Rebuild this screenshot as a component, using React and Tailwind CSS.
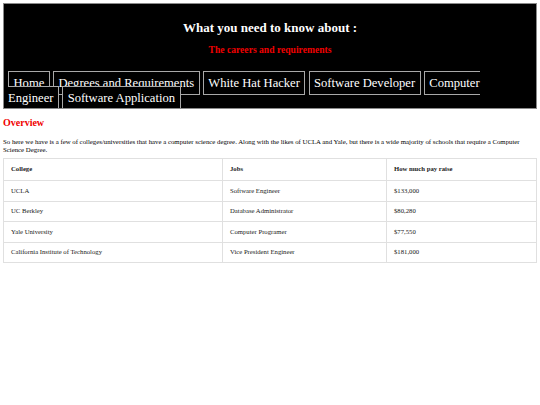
const navItems = [
  "Home",
  "Degrees and Requirements",
  "White Hat Hacker",
  "Software Developer",
  "Computer Engineer",
  "Software Application",
];

const rows = [
  ["UCLA", "Software Engineer", "$133,000"],
  ["UC Berkley", "Database Administrator", "$80,280"],
  ["Yale University", "Computer Programer", "$77,550"],
  ["California Institute of Technology", "Vice President Engineer", "$181,000"],
];

const App = () => {
  return (
    <div className="w-[540px] h-[405px] bg-white p-[3px] font-['Liberation_Serif','Times_New_Roman',serif] overflow-hidden">
      {/* Header */}
      <header className="bg-black border border-[#8a8a8a] h-[106px] overflow-hidden">
        <h1 className="mt-[16px] text-center text-white font-bold text-[13px] leading-[15px]">
          What you need to know about :
        </h1>
        <h2 className="mt-[9px] text-center text-[#f00000] font-bold text-[9.6px] leading-[11px]">
          The careers and requirements
        </h2>
        <nav className="mt-[21px] pl-[4px] w-[512px] text-white text-[12.6px] leading-[15px]">
          {navItems.map((item, i) => (
            <span key={item}>
              <span className="bg-black border border-[#a8a8a8] px-[4.5px] py-[4px]">{item}</span>
              {i < navItems.length - 1 ? " " : ""}
            </span>
          ))}
        </nav>
      </header>

      {/* Overview */}
      <h2 className="mt-[8px] text-[#f00000] font-bold text-[10px] leading-[12px]">Overview</h2>
      <p className="mt-[9px] w-[526px] text-black text-[6.8px] leading-[7.5px]">
        So here we have is a few of colleges/universities that have a computer science degree. Along with the likes of UCLA and Yale, but there is a wide majority of schools that require a Computer Science Degree.
      </p>

      <table className="mt-[5px] w-[534px] border-collapse border border-[#e0e0e0] text-[6.7px] text-[#222] table-fixed">
        <thead>
          <tr className="h-[22px]">
            <th className="w-[219px] border border-[#e0e0e0] pl-[7px] text-left font-bold">College</th>
            <th className="w-[164px] border border-[#e0e0e0] pl-[7px] text-left font-bold">Jobs</th>
            <th className="border border-[#e0e0e0] pl-[7px] text-left font-bold">How much pay raise</th>
          </tr>
        </thead>
        <tbody>
          {rows.map((r) => (
            <tr key={r[0]} className="h-[20.5px]">
              {r.map((c) => (
                <td key={c} className="border border-[#e0e0e0] pl-[7px]">{c}</td>
              ))}
            </tr>
          ))}
        </tbody>
      </table>
    </div>
  );
};

export default App;
